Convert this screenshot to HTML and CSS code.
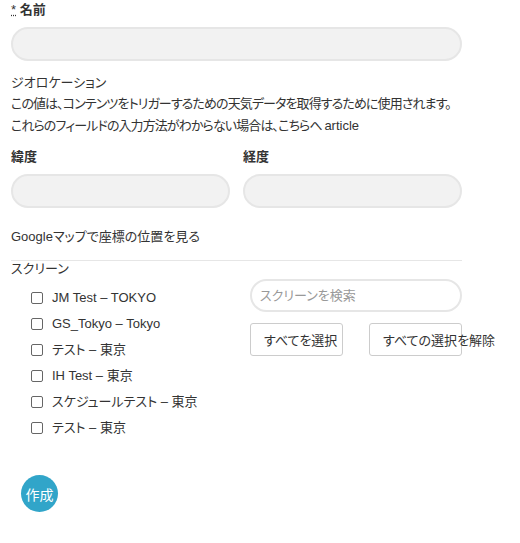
FILE: index.html
```html
<!DOCTYPE html>
<html lang="ja">
<head>
  <meta charset="UTF-8">
  <meta name="viewport" content="width=device-width, initial-scale=1.0">
  <title>スクリーン設定</title>
  <link rel="stylesheet" href="styles.css">
</head>
<body>
  <form class="form">
    <label class="field-label"><abbr title="required">*</abbr> 名前</label>
    <input class="text-input" type="text">

    <div class="geo">
      <div class="geo-title">ジオロケーション</div>
      <p class="geo-desc">この値は、コンテンツをトリガーするための天気データを取得するために使用されます。<br>これらのフィールドの入力方法がわからない場合は、こちらへ <a class="geo-link">article</a></p>
    </div>

    <div class="coords">
      <div class="coord">
        <label class="field-label">緯度</label>
        <input class="text-input" type="text">
      </div>
      <div class="coord">
        <label class="field-label">経度</label>
        <input class="text-input" type="text">
      </div>
    </div>

    <div class="map-link">Googleマップで座標の位置を見る</div>

    <hr class="divider">

    <div class="screens-title">スクリーン</div>
    <div class="screens">
      <ul class="screen-list">
        <li><label><input type="checkbox"> JM Test – TOKYO</label></li>
        <li><label><input type="checkbox"> GS_Tokyo – Tokyo</label></li>
        <li><label><input type="checkbox"> テスト – 東京</label></li>
        <li><label><input type="checkbox"> IH Test – 東京</label></li>
        <li><label><input type="checkbox"> スケジュールテスト – 東京</label></li>
        <li><label><input type="checkbox"> テスト – 東京</label></li>
      </ul>
      <div class="screen-tools">
        <input class="text-input search" type="text" placeholder="スクリーンを検索">
        <div class="tool-buttons">
          <button type="button" class="btn">すべてを選択</button>
          <button type="button" class="btn">すべての選択を解除</button>
        </div>
      </div>
    </div>

    <button type="button" class="submit">作成</button>
  </form>
</body>
</html>
```

FILE: styles.css
```css
body {
  margin: 0;
  font-family: "Liberation Sans", "Noto Sans CJK JP", sans-serif;
  font-size: 13px;
  font-feature-settings: "palt";
  color: #333;
}

.form {
  width: 451px;
  padding-left: 11px;
}

.field-label {
  display: block;
  height: 20px;
  line-height: 20px;
  font-weight: bold;
  color: #333;
}

.field-label abbr {
  font-weight: normal;
  text-decoration: underline dotted;
}

.text-input {
  display: block;
  box-sizing: border-box;
  width: 100%;
  height: 34px;
  margin: 7px 0 0;
  padding: 0 8px;
  background: #f2f2f2;
  border: 2px solid #e6e6e6;
  border-radius: 17px;
  font: inherit;
  outline: none;
}

.geo {
  margin-top: 12px;
}

.geo-title {
  line-height: 20px;
}

.geo-desc {
  margin: 0;
  line-height: 22px;
  letter-spacing: -0.9px;
  white-space: nowrap;
}

.geo-link {
  letter-spacing: 0;
  color: #333;
}

.coords {
  display: flex;
  gap: 13px;
  margin-top: 10px;
}

.coord {
  flex: 1;
}

.map-link {
  margin-top: 19px;
  line-height: 20px;
}

.divider {
  margin: 13px 0 0;
  border: 0;
  border-top: 1px solid #e6e6e6;
}

.screens-title {
  line-height: 16px;
}

.screens {
  display: grid;
  grid-template-columns: 239px 1fr;
}

.screen-list {
  list-style: none;
  margin: 8px 0 0;
  padding-left: 20px;
}

.screen-list li {
  height: 26px;
  line-height: 26px;
}

.screen-list label {
  display: flex;
  align-items: center;
  gap: 9px;
  white-space: nowrap;
}

.screen-list input {
  appearance: none;
  width: 12px;
  height: 12px;
  margin: 0;
  border: 1px solid #666;
  border-radius: 2px;
  background: #fff;
}

.search {
  height: 33px;
  margin-top: 2px;
  background: #fff;
}

.search::placeholder {
  color: #999;
}

.tool-buttons {
  display: flex;
  gap: 26px;
  margin-top: 11px;
}

.btn {
  width: 93px;
  height: 33px;
  padding: 0 0 0 13px;
  background: #fff;
  border: 1px solid #ccc;
  border-radius: 3px;
  font: inherit;
  color: #333;
  text-align: left;
  white-space: nowrap;
  overflow: visible;
}

.submit {
  display: block;
  width: 37px;
  height: 37px;
  margin: 34px 0 0 10px;
  padding: 0;
  border: 0;
  border-radius: 50%;
  background: #31a5c9;
  color: #fff;
  font: inherit;
  font-size: 14px;
}
```
